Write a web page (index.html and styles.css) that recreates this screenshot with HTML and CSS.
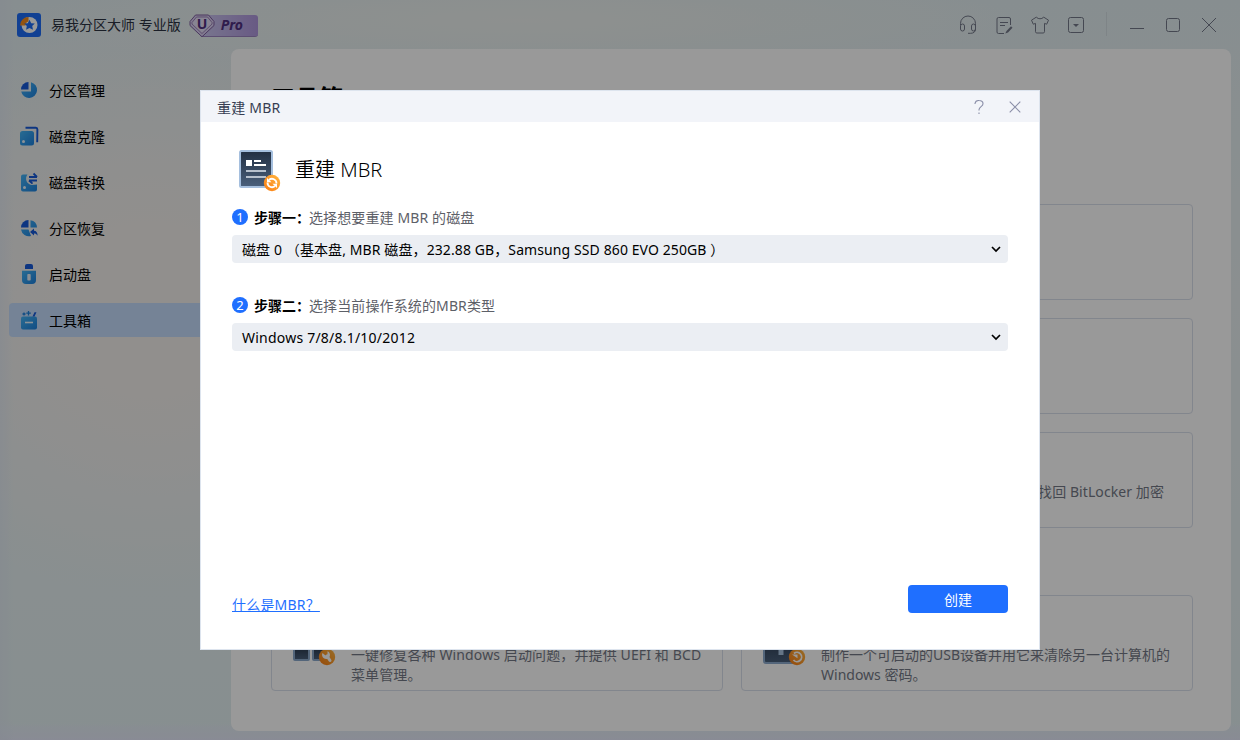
FILE: index.html
```
<!DOCTYPE html>
<html lang="zh-CN">
<head>
  <meta charset="UTF-8" />
  <meta name="viewport" content="width=device-width, initial-scale=1.0"/>
  <title>重建 MBR</title>
  <link rel="stylesheet" href="styles.css">
</head>
<body>

  <div class="app">
    <header class="topbar">
      <svg class="logo" width="24" height="24" viewBox="0 0 24 24">
        <rect width="24" height="24" rx="3" fill="#1d6cf5"/>
        <circle cx="12.5" cy="12" r="8" fill="#fff"/>
        <path d="M3 12.500A8.500 8.500 0 0 1 11.500 4v4.500a4 4 0 0 0-3 4z" fill="#f58a1c"/>
        <path d="M12.500 6.800l1.700 3.400 3.600.4-2.600 2.500.8 3.700-3.500-1.700-3.400 1.700.7-3.700-2.600-2.500 3.600-.4z" fill="#1d6cf5"/>
      </svg>
      <span class="app-name">易我分区大师 专业版</span>
      <div class="pro">
        <svg class="pro-gem" width="26" height="24" viewBox="0 0 26 24">
          <path d="M6.500 1h13L25 7.500v4L13 22.800 1 11.500v-4z" fill="#d8cdf0" stroke="#7d5d9e"/>
          <path d="M7.500 3h11l4.500 5.500v1.500L13 19.500 3 10V8.500z" fill="#e3dcf5" stroke="#8b6daa" stroke-width=".8"/>
        </svg>
        <span class="pro-u">U</span>
        <span class="pro-text">Pro</span>
      </div>

      <div class="tools">
        <svg width="20" height="20" viewBox="0 0 20 20">
          <path d="M2.500 10V8.500a7.500 7.500 0 0 1 15 0V14c0 3-2 4.300-5 4.300h-2.500"/>
          <rect x="2.500" y="9" width="4" height="7" rx="2"/>
          <rect x="13.500" y="9" width="4" height="7" rx="2"/>
        </svg>
        <svg width="20" height="20" viewBox="0 0 20 20">
          <path d="M16.500 10V4a1.500 1.500 0 0 0-1.500-1.500H4.500A1.500 1.500 0 0 0 3 4v13A1.500 1.500 0 0 0 4.500 18.500H10M6 7.500h8M6 10.500h5"/>
          <path d="M17 11.200l-4.500 4.700-1.200 2.700 2.700-1L18.500 12.700z" class="solid"/>
        </svg>
        <svg width="20" height="20" viewBox="0 0 20 20">
          <path d="M6.500 2L1.500 5.200l1.800 4 2.200-.8v8.300c0 .8.500 1.300 1.300 1.300h6.400c.8 0 1.300-.5 1.300-1.300V8.400l2.200.8 1.800-4L13.500 2c-.8 2.300-6.200 2.300-7 0z"/>
        </svg>
        <svg width="20" height="20" viewBox="0 0 20 20">
          <rect x="2.500" y="2.500" width="15" height="15" rx="2"/>
          <path d="M7 9h6L10 12z" class="solid"/>
        </svg>
      </div>
      <span class="divider"></span>
      <div class="win-btns">
        <svg width="16" height="16" viewBox="0 0 16 16"><path d="M1 11.500h14"/></svg>
        <svg width="16" height="16" viewBox="0 0 16 16"><rect x="1.500" y="1.500" width="13" height="13" rx="2"/></svg>
        <svg width="16" height="16" viewBox="0 0 16 16"><path d="M1 1l14 14M15 1L1 15"/></svg>
      </div>
    </header>

    <div class="main">
      <!-- shared fills for the icons -->
      <svg class="defs" width="0" height="0">
        <linearGradient id="sky" x1="0" y1="0" x2="1" y2="1">
          <stop offset="0" stop-color="#45b4f5"/>
          <stop offset="1" stop-color="#1c80dd"/>
        </linearGradient>
        <linearGradient id="slate" x1="0" y1="0" x2="0" y2="1">
          <stop offset="0" stop-color="#222f42"/>
          <stop offset="1" stop-color="#4a607c"/>
        </linearGradient>
        <linearGradient id="orange" x1="1" y1="0" x2="0" y2="1">
          <stop offset="0" stop-color="#ffb640"/>
          <stop offset="1" stop-color="#fb7d12"/>
        </linearGradient>
      </svg>

      <nav class="sidebar">
        <a class="nav-item">
          <svg width="20" height="20" viewBox="0 0 20 20">
            <path d="M12 2.200A8 8 0 1 1 2.200 11.500H12z" fill="url(#sky)"/>
            <path d="M9.500 2v7.500H2A7.500 7.500 0 0 1 9.500 2z" fill="#1659d8"/>
          </svg>
          分区管理
        </a>
        <a class="nav-item">
          <svg width="20" height="20" viewBox="0 0 20 20">
            <path d="M6.500 1.700h10.300a1.700 1.700 0 0 1 1.600 1.700l-.2 12.800" fill="none" stroke="#1659d8" stroke-width="1.900"/>
            <rect x="1" y="5" width="14" height="14.500" rx="2.500" fill="url(#sky)"/>
            <circle cx="4.500" cy="15.500" r="1.500" fill="#e8f3fc"/>
          </svg>
          磁盘克隆
        </a>
        <a class="nav-item">
          <svg width="20" height="20" viewBox="0 0 20 20">
            <path d="M4 2.500h4.500A6.500 6.500 0 0 0 12.500 13L18 12.500V17.500a2 2 0 0 1-2 2H4a2 2 0 0 1-2-2v-13a2 2 0 0 1 2-2z" fill="url(#sky)"/>
            <circle cx="5.500" cy="15.500" r="1.500" fill="#e8f3fc"/>
            <path d="M10 5h8M14.500 1.500L18 5M18 8.500h-8M10 8.500l3.500 3.200" fill="none" stroke="#1659d8" stroke-width="1.800"/>
          </svg>
          磁盘转换
        </a>
        <a class="nav-item">
          <svg width="20" height="20" viewBox="0 0 20 20">
            <path d="M11.500 2.200A7.800 7.800 0 0 1 18 9.500h-6.500zM2 11.500h7.500L12 18A8 8 0 0 1 2 11.500z" fill="url(#sky)"/>
            <path d="M9.500 2v7.500H2A7.500 7.500 0 0 1 9.500 2z" fill="#1659d8"/>
            <path d="M11 14l4-3.500v2.200c2.500 0 3.600 2 3.600 5-1-1.700-2-2.300-3.600-2.300v2.200z" fill="#1659d8"/>
          </svg>
          分区恢复
        </a>
        <a class="nav-item">
          <svg width="20" height="20" viewBox="0 0 20 20">
            <path d="M6 5V2a2 2 0 0 1 2-2h4a2 2 0 0 1 2 2v3z" fill="#1659d8"/>
            <path d="M3 6.800h14V16a4 4 0 0 1-4 4H7a4 4 0 0 1-4-4z" fill="url(#sky)"/>
            <rect x="8.300" y="10" width="3.400" height="6.500" rx=".8" fill="#e8eef5"/>
          </svg>
          启动盘
        </a>
        <a class="nav-item active">
          <svg width="20" height="20" viewBox="0 0 20 20">
            <rect x="2" y="6.500" width="16" height="13" rx="2" fill="url(#sky)"/>
            <path d="M6 12.500h8" stroke="#e8f3fc" stroke-width="1.600"/>
            <path d="M13.500 6.500l2-4.300h2L15.500 6.500z" fill="#1659d8"/>
            <path d="M5 2.500v3M3.500 4h3M9.500 1v4.500M7.300 3.200h4.500" stroke="#1c80dd" stroke-width="1.300"/>
          </svg>
          工具箱
        </a>
      </nav>

      <section class="panel">
        <h1>工具箱</h1>
        <div class="cards">
          <div class="card"></div>
          <div class="card"></div>
          <div class="card"></div>
          <div class="card"></div>
          <div class="card"></div>
          <div class="card"><p class="align-end">找回 BitLocker 加密</p></div>
        </div>
        <div class="cards second">
          <div class="card">
            <svg class="card-icon" width="44" height="44" viewBox="0 0 44 44">
              <rect x="1" y="3" width="15" height="16" rx="1" fill="url(#slate)" stroke="#8ba9cc" stroke-width="2"/>
              <rect x="20" y="3" width="15" height="16" rx="1" fill="url(#slate)" stroke="#8ba9cc" stroke-width="2"/>
              <rect x="1" y="22" width="15" height="16" rx="1" fill="url(#slate)" stroke="#8ba9cc" stroke-width="2"/>
              <rect x="20" y="22" width="15" height="16" rx="1" fill="url(#slate)" stroke="#8ba9cc" stroke-width="2"/>
              <circle cx="34" cy="35" r="8.200" fill="url(#orange)"/>
              <path d="M34 34l3 4.500" stroke="#fff" stroke-width="3" stroke-linecap="round"/>
              <path d="M29.500 31a4 4 0 1 0 5-1.800v3l-2 1.200z" fill="#fff"/>
            </svg>
            <p class="spaced">一键修复各种 Windows 启动问题，并提供 UEFI 和 BCD<br>菜单管理。</p>
          </div>
          <div class="card">
            <svg class="card-icon" width="44" height="44" viewBox="0 0 44 44">
              <rect x="1" y="8" width="33" height="33" rx="2" fill="url(#slate)" stroke="#8ba9cc" stroke-width="2"/>
              <path d="M18 22v11" stroke="#a9c3e0" stroke-width="5"/>
              <circle cx="34" cy="35" r="8.200" fill="url(#orange)"/>
              <path d="M31 31.500a4.600 4.600 0 1 1-.5 6.500" fill="none" stroke="#fff" stroke-width="1.800"/>
              <path d="M29 32.500h5.500v3.800z" fill="#fff"/>
            </svg>
            <p>制作一个可启动的USB设备并用它来清除另一台计算机的<br>Windows 密码。</p>
          </div>
        </div>
      </section>
    </div>
  </div>

  <div class="overlay">
    <div class="dialog">
      <div class="dialog-bar">
        <span>重建 MBR</span>
        <div class="dialog-btns">
          <svg width="12" height="16" viewBox="0 0 12 16">
            <path d="M2 5V4.500A3.700 3.700 0 0 1 6 1.500c2.300 0 4 1.200 4 3.200 0 2.800-4 3-4 6v.8M6 13.500V15"/>
          </svg>
          <svg width="12" height="12" viewBox="0 0 12 12"><path d="M.7.7l10.600 10.600M11.300.7L.7 11.300"/></svg>
        </div>
      </div>

      <div class="dialog-body">
        <div class="dialog-title">
          <svg width="42" height="42" viewBox="0 0 42 42">
            <rect x="1" y="1" width="32" height="36" rx="1.500" fill="url(#slate)" stroke="#a5bfde" stroke-width="2"/>
            <path d="M7 10h6v6H7z" fill="#fff"/>
            <path d="M15 11h7M15 15h12" stroke="#fff" stroke-width="2"/>
            <path d="M7 21h20M7 27h20" stroke="#b6c0cd" stroke-width="2"/>
            <circle cx="33" cy="33" r="8.200" fill="url(#orange)"/>
            <path d="M30 30a4.500 4.500 0 0 1 7.500 3.500M36 36a4.500 4.500 0 0 1-7.500-3.500" fill="none" stroke="#fff" stroke-width="1.800"/>
            <path d="M28 28v4.200h4.500zM38 38v-4.200h-4.500z" fill="#fff"/>
          </svg>
          <h2>重建 MBR</h2>
        </div>

        <div class="step">
          <span class="num">1</span>
          <b>步骤一：</b>
          <span class="spaced">选择想要重建 MBR 的磁盘</span>
        </div>
        <div class="select">
          <span>磁盘 0 （基本盘, MBR 磁盘，232.88 GB，Samsung SSD 860 EVO 250GB ）</span>
          <svg width="10" height="7" viewBox="0 0 10 7"><path d="M1 1l4 4 4-4"/></svg>
        </div>

        <div class="step step-two">
          <span class="num">2</span>
          <b>步骤二：</b>
          <span class="spaced">选择当前操作系统的MBR类型</span>
        </div>
        <div class="select">
          <span class="latin">Windows 7/8/8.1/10/2012</span>
          <svg width="10" height="7" viewBox="0 0 10 7"><path d="M1 1l4 4 4-4"/></svg>
        </div>

        <div class="dialog-footer">
          <a class="link">什么是MBR？</a>
          <button class="create">创建</button>
        </div>
      </div>
    </div>
  </div>

</body>
</html>
```
FILE: styles.css
```
* {
  box-sizing: border-box;
}

body {
  margin: 0;
  font-family: "Noto Sans", "Noto Sans CJK SC", sans-serif;
  font-size: 14px;
  line-height: 20px;
  color: #000;
  overflow: hidden;
}

h1, h2, p {
  margin: 0;
}

.app {
  width: 1240px;
  height: 740px;
  display: flex;
  flex-direction: column;
  background:
    linear-gradient(to right, rgba(222, 230, 242, 0.6), transparent 14px),
    linear-gradient(to top, #e4e8f8, transparent 20px),
    radial-gradient(ellipse 300px 290px at 150px 310px, #f2efec 30%, transparent),
    radial-gradient(ellipse 500px 50px at 520px 20px, #edf1ee, transparent),
    linear-gradient(to bottom, #e2edf0, #e8eff0 40%, #e2eff0);
}

.topbar {
  height: 49px;
  flex: none;
  display: flex;
  align-items: center;
  padding: 0 23px 0 17px;
}

.app-name {
  margin-left: 10px;
  color: #2c3342;
}

/* pro badge */
.pro {
  width: 58px;
  height: 22px;
  margin: 2px 0 0 19px;
  position: relative;
  border-radius: 3px;
  border-bottom: 1px solid #9a83bf;
  background: linear-gradient(to right, #cac6ee, #ae96dc);
}

.pro-gem {
  position: absolute;
  left: -11px;
  top: -1px;
}

.pro-u {
  position: absolute;
  left: -3px;
  top: -1px;
  font-weight: bold;
  font-size: 14px;
  color: #503080;
}

.pro-text {
  position: absolute;
  left: 21px;
  top: 0;
  font-weight: bold;
  font-style: italic;
  font-size: 14px;
  color: #503080;
}

.tools {
  margin-left: auto;
  display: flex;
  gap: 16px;
}

.tools svg,
.win-btns svg {
  fill: none;
  stroke: #747989;
}

.tools .solid {
  fill: #747989;
  stroke: none;
}

.divider {
  width: 1px;
  height: 24px;
  margin: 0 22px 2px 20px;
  background: #d3dde2;
}

.win-btns {
  display: flex;
  gap: 20px;
}

.main {
  display: flex;
  flex: 1;
}

.defs {
  position: absolute;
}

.sidebar {
  width: 231px;
  padding: 24px 0 0 9px;
  display: flex;
  flex-direction: column;
  gap: 12px;
}

.nav-item {
  height: 34px;
  display: flex;
  align-items: center;
  gap: 10px;
  padding: 2px 0 0 10px;
  border-radius: 4px;
}

.nav-item svg {
  margin-bottom: 3px;
}

.nav-item.active {
  background: #c3dbfa;
}

.panel {
  width: 1000px;
  height: 682px;
  padding: 31px 38px 0 40px;
  border-radius: 8px;
  background: #fff;
}

.panel h1 {
  font-size: 24px;
  line-height: 36px;
}

.cards {
  display: grid;
  grid-template-columns: 452px 452px;
  gap: 18px;
  margin-top: 88px;
}

.cards.second {
  margin-top: 67px;
}

.card {
  height: 96px;
  display: flex;
  gap: 14px;
  padding: 26px 28px 0 21px;
  border: 1px solid #d9dfeb;
  border-radius: 4px;
}

.card-icon {
  flex: none;
}

.card p {
  padding-top: 23px;
  color: #747986;
  white-space: nowrap;
}

.card .align-end {
  margin-left: auto;
  letter-spacing: 0.08px;
}

.spaced {
  letter-spacing: 0.12px;
}

.overlay {
  position: fixed;
  inset: 0;
  display: flex;
  align-items: center;
  justify-content: center;
  background: rgba(0, 0, 0, 0.4);
}

.dialog {
  width: 840px;
  height: 560px;
  border: 1px solid #dde4ee;
  background: #fff;
  display: flex;
  flex-direction: column;
}

.dialog-bar {
  height: 31px;
  display: flex;
  align-items: center;
  justify-content: space-between;
  padding: 2px 18px 0 16px;
  background: #f2f4f9;
  color: #363d52;
  letter-spacing: 0.2px;
}

.dialog-btns {
  display: flex;
  align-items: center;
  gap: 24px;
  padding-bottom: 2px;
}

.dialog-btns svg {
  fill: none;
  stroke: #8a8ea8;
  stroke-width: 1.1;
}

.dialog-body {
  flex: 1;
  display: flex;
  flex-direction: column;
  padding: 28px 31px 36px;
}

.dialog-title {
  display: flex;
  gap: 14px;
  padding-left: 7px;
}

.dialog-title h2 {
  font-size: 20px;
  font-weight: 350;
  line-height: 40px;
}

.step {
  height: 20px;
  margin-top: 16px;
  display: flex;
  align-items: center;
  color: #5d6068;
}

.step b {
  width: 55px;
  color: #000;
  white-space: nowrap;
}

.step-two {
  margin-top: 33px;
}

.num {
  width: 16px;
  height: 16px;
  margin: 0 6px 2px 0;
  border-radius: 50%;
  background: #1f6fff;
  color: #fff;
  font-size: 13px;
  line-height: 16px;
  text-align: center;
}

.select {
  height: 28px;
  margin-top: 7px;
  display: flex;
  align-items: center;
  justify-content: space-between;
  padding: 1px 7px 0 10px;
  border-radius: 4px;
  background: #ebeef3;
  letter-spacing: 0.1px;
}

.select .latin {
  letter-spacing: 0.22px;
}

.select svg {
  fill: none;
  stroke: #000;
  stroke-width: 1.7;
}

.dialog-footer {
  margin: auto 0 -2px;
  display: flex;
  align-items: center;
  justify-content: space-between;
}

.link {
  padding-top: 12px;
  color: #1f6fff;
  text-decoration: underline;
  letter-spacing: 0.2px;
}

.create {
  width: 100px;
  height: 28px;
  padding: 1px 0 0;
  border: none;
  border-radius: 4px;
  background: #1f6fff;
  color: #fff;
  font: inherit;
}
```
